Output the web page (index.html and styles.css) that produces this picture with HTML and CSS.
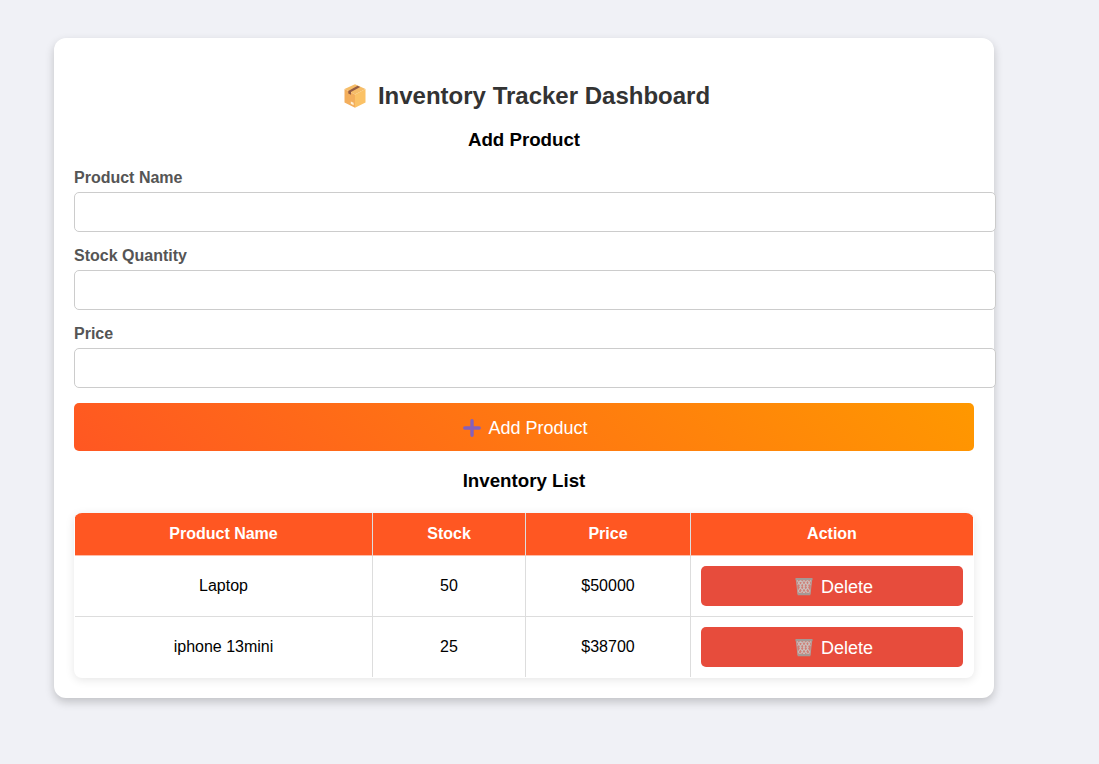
FILE: index.html
```html
<!DOCTYPE html>
<html lang="en">
<head>
<meta charset="utf-8">
<title>Inventory Tracker Dashboard</title>
<link rel="stylesheet" href="styles.css">
</head>
<body>
<svg class="defs" width="0" height="0" aria-hidden="true">
  <symbol id="bin" viewBox="0 0 18 19">
    <path d="M1.300 2.500h15.400L15 17.400H3z" fill="#cf7f76"/>
    <path d="M2 3l4.200 6.500L3.200 14l2 3M5.500 3l4.200 6.500L5 17M9 3l4.200 6.500L8.500 17M12.500 3l3 5M16 3l-4.200 6.500 3 4.500-2 3M12.500 3L8.300 9.500l4.700 7.500M9 3L4.800 9.500l4.700 7.500M5.500 3l-3 5" fill="none" stroke="#cbbfbc" stroke-width="1.100"/>
    <path d="M1.300 2.500L3 17.400M16.700 2.500L15 17.400" stroke="#b1a09d" stroke-width="1"/>
    <path d="M.5 1h17v2.200H.5zM2.700 16h12.600v2.200H2.700z" fill="#a49995"/>
  </symbol>
</svg>
<main class="card">
  <h1 class="title">
    <svg class="box-icon" viewBox="0 0 22 24" aria-hidden="true">
      <path d="M11 .3L21.500 5 11 10.500.5 5z" fill="#f6bd68"/>
      <path d="M.5 5L11 10.500v13.200L.5 18.500z" fill="#f3ae5c"/>
      <path d="M21.500 5L11 10.500v13.200l10.500-5.200z" fill="#fbc266"/>
      <path d="M4.300 6.900L13.600 1.700l2.600 1.200L7 8v2.800L4.300 9.400z" fill="#935b45"/>
      <path d="M6.800 17.400l2.800 1.400v2.400l-2.800-1.400z" fill="#fff0d7"/>
    </svg>
    <span>Inventory Tracker Dashboard</span>
  </h1>
  <h2 class="subtitle">Add Product</h2>
  <form class="form">
    <label class="label" for="name">Product Name</label>
    <input class="input" id="name" type="text">
    <label class="label" for="stock">Stock Quantity</label>
    <input class="input" id="stock" type="text">
    <label class="label" for="price">Price</label>
    <input class="input" id="price" type="text">
    <button class="add" type="button">
      <svg class="plus" viewBox="0 0 18 18" aria-hidden="true"><path d="M9 1.800v14.400M1.800 9h14.400" stroke="#8460bd" stroke-width="3.400" stroke-linecap="round"/></svg>
      <span>Add Product</span>
    </button>
  </form>
  <h2 class="subtitle list-title">Inventory List</h2>
  <div class="table-wrap">
    <table class="table">
      <colgroup><col class="c-name"><col class="c-stock"><col class="c-price"><col></colgroup>
      <thead><tr><th>Product Name</th><th>Stock</th><th>Price</th><th>Action</th></tr></thead>
      <tbody>
        <tr><td>Laptop</td><td>50</td><td>$50000</td><td><button class="delete" type="button"><svg class="bin" aria-hidden="true"><use href="#bin"/></svg><span>Delete</span></button></td></tr>
        <tr><td>iphone 13mini</td><td>25</td><td>$38700</td><td><button class="delete" type="button"><svg class="bin" aria-hidden="true"><use href="#bin"/></svg><span>Delete</span></button></td></tr>
      </tbody>
    </table>
  </div>
</main>
</body>
</html>
```

FILE: styles.css
```css
body {
  box-sizing: border-box;
  min-height: 100vh;
  margin: 0;
  padding: 38px 0 0 54px;
  background: #f0f1f6;
  font-family: "Liberation Sans", Arial, sans-serif;
  color: #000;
}
.defs { display: block; }
.card {
  box-sizing: border-box;
  width: 940px;
  height: 660px;
  padding: 44px 20px 20px;
  border-radius: 12px;
  background: #fff;
  box-shadow: 0 4px 10px rgba(0, 0, 0, .2);
}
.title {
  display: flex;
  justify-content: center;
  align-items: center;
  gap: 12px;
  height: 28px;
  margin: 0 0 19px;
  padding-left: 6px;
  color: #333;
  font-size: 24px;
  line-height: 28px;
}
.box-icon { width: 22px; height: 24px; }
.subtitle {
  margin: 0 0 18px;
  font-size: 18.72px;
  line-height: 22px;
  text-align: center;
}
.form { display: flex; flex-direction: column; }
.label {
  margin-bottom: 5px;
  color: #555;
  font-size: 16px;
  font-weight: bold;
  line-height: 18px;
}
.input {
  box-sizing: border-box;
  width: 922px;
  height: 40px;
  margin: 0 0 15px;
  padding: 10px;
  border: 1px solid #ccc;
  border-radius: 5px;
  background: #fff;
  font-size: 16px;
}
.add, .delete {
  display: flex;
  align-items: center;
  justify-content: center;
  width: 100%;
  padding: 0;
  border: 0;
  border-radius: 5px;
  color: #fff;
  font-family: inherit;
  font-size: 18px;
  line-height: 20px;
}
.add {
  gap: 7px;
  height: 48px;
  padding: 1px 0 0 3px;
  background: linear-gradient(45deg, #ff5722, #ff9800);
}
.plus { width: 18px; height: 18px; }
.list-title { margin: 19px 0 21px; }
.table-wrap {
  padding: 0 1px 1px;
  border-radius: 8px;
  overflow: hidden;
  background: #fff;
  box-shadow: 0 2px 10px rgba(0, 0, 0, .1);
}
.table {
  width: 898px;
  table-layout: fixed;
  border-collapse: separate;
  border-spacing: 0;
  font-size: 16px;
  line-height: 18px;
  text-align: center;
}
.c-name { width: 298px; }
.c-stock { width: 153px; }
.c-price { width: 165px; }
.table th, .table td {
  box-sizing: border-box;
  padding: 0 10px;
  border-right: 1px solid #ddd;
  border-bottom: 1px solid #ddd;
}
.table th {
  height: 43px;
  padding-bottom: 1px;
  border-bottom-color: #ffbca7;
  background: #ff5722;
  color: #fff;
}
.table td { height: 61px; }
.table th:last-child, .table td:last-child { border-right: 0; }
.table tr:last-child td { height: 60px; border-bottom: 0; }
.delete {
  gap: 8px;
  height: 40px;
  padding: 1px 0 0 4px;
  background: #e74c3c;
}
.bin { width: 18px; height: 19px; }
```
